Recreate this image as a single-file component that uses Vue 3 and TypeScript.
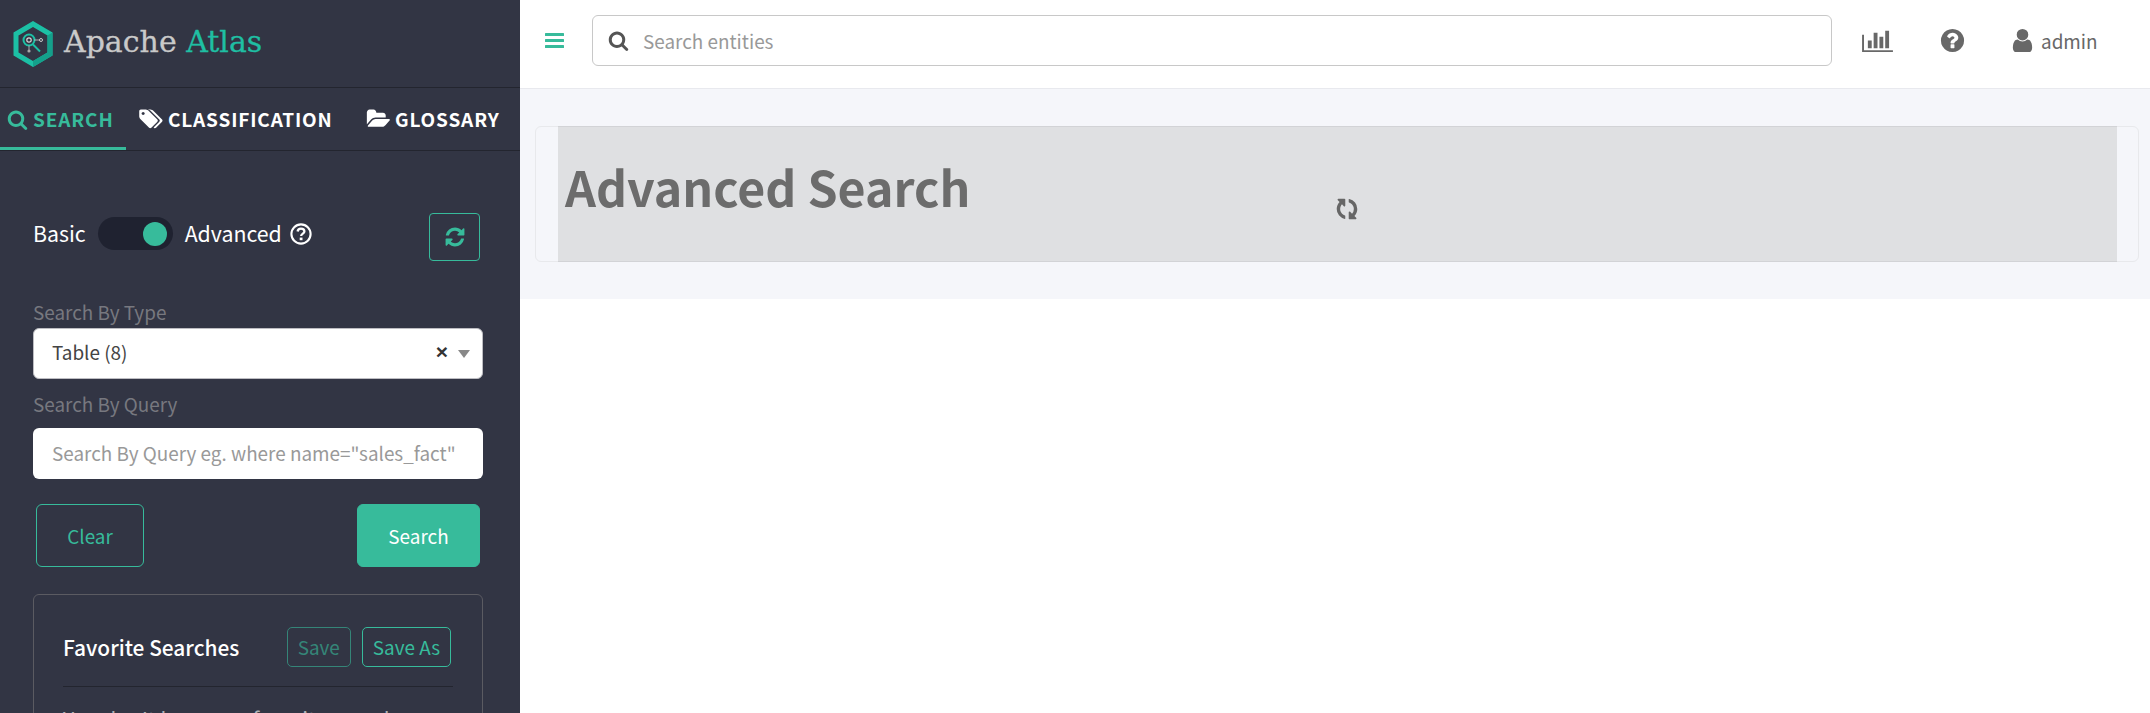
<script setup lang="ts">
const tabs = [
  { label: 'SEARCH', active: true },
  { label: 'CLASSIFICATION', active: false },
  { label: 'GLOSSARY', active: false },
]

const searchPath = 'M1216 832q0-185-131.500-316.500t-316.500-131.500-316.500 131.500-131.500 316.500 131.500 316.500 316.500 131.500 316.500-131.500 131.500-316.500zm512 832q0 52-38 90t-90 38q-54 0-90-38l-343-342q-179 124-399 124-143 0-273.500-55.500t-225-150-150-225-55.500-273.500 55.500-273.500 150-225 225-150 273.500-55.500 273.500 55.500 225 150 150 225 55.500 273.500q0 220-124 399l343 343q37 37 37 90z'
const refreshPath = 'M1639 1056q0 5-1 7-64 268-268 434.500t-478 166.500q-146 0-282.500-55t-243.500-157l-129 129q-19 19-45 19t-45-19-19-45v-448q0-26 19-45t45-19h448q26 0 45 19t19 45-19 45l-137 137q71 66 161 102t187 36q134 0 250-65t186-179q11-17 53-117 8-23 30-23h192q13 0 22.500 9.500t9.500 22.500zm25-800v448q0 26-19 45t-45 19h-448q-26 0-45-19t-19-45 19-45l138-138q-148-137-349-137-134 0-250 65t-186 179q-11 17-53 117-8 23-30 23h-199q-13 0-22.500-9.500t-9.500-22.500v-7q65-268 270-434.500t480-166.500q146 0 284 55.500t245 156.500l130-129q19-19 45-19t45 19 19 45z'
</script>

<template>
  <div class="page">
    <aside class="sidebar">
      <div class="brand">
        <svg class="logo" viewBox="0 0 40 46" width="40" height="46">
          <path d="M20 3 37 13V33L20 43 3 33V13Z" fill="none" stroke="#1cc0a5" stroke-width="5" stroke-linejoin="miter" />
          <path d="M39.500 11.500V34.500L20 46V40L34.500 31.500V14.500Z" fill="#14a08b" />
          <circle cx="16" cy="19" r="5.500" fill="none" stroke="#1cc0a5" stroke-width="2" />
          <circle cx="16" cy="19" r="2.200" fill="none" stroke="#d5d5d5" stroke-width="1.200" />
          <path d="M20 23.500 27 30.500" stroke="#1cc0a5" stroke-width="2" />
          <path d="M21 19H27M16 24.500V29" stroke="#c8c8c8" stroke-width=".8" />
          <circle cx="28" cy="19" r="1.500" fill="none" stroke="#c8c8c8" />
          <circle cx="16" cy="30" r="1.600" fill="#a8a8a8" />
        </svg>
        <span class="brand-name">Apache <span class="brand-accent">Atlas</span></span>
      </div>

      <nav class="tabs">
        <a v-for="tab in tabs" :key="tab.label" class="tab" :class="{ active: tab.active }">
          <svg v-if="tab.label === 'SEARCH'" class="tab-icon" viewBox="0 0 1792 1792" width="21" height="21"><path :d="searchPath" /></svg>
          <svg v-else-if="tab.label === 'CLASSIFICATION'" class="tab-icon" viewBox="0 0 1920 1792" width="24" height="22"><path d="M448 448q0-53-37.500-90.500t-90.500-37.500-90.500 37.500-37.500 90.500 37.500 90.500 90.500 37.500 90.500-37.500 37.500-90.500zm1067 576q0 53-37 90l-491 492q-39 37-91 37-53 0-90-37l-715-716q-38-37-64.500-101t-26.500-117v-416q0-52 38-90t90-38h416q53 0 117 26.500t102 64.500l715 714q37 39 37 91zm384 0q0 53-37 90l-491 492q-39 37-91 37-36 0-59-14t-53-45l470-470q37-37 37-90 0-52-37-91l-715-714q-38-38-102-64.500t-117-26.500h224q53 0 117 26.500t102 64.500l715 714q37 39 37 91z" /></svg>
          <svg v-else class="tab-icon" viewBox="0 0 1943 1792" width="24" height="22"><path d="M1943 952q0 31-31 66l-336 396q-43 51-120.500 86.500t-143.500 35.500h-1088q-34 0-60.500-13t-26.500-43q0-31 31-66l336-396q43-51 120.500-86.500t143.500-35.500h1088q34 0 60.500 13t26.500 43zm-343-344v160h-832q-94 0-197 47.500t-164 119.500l-337 396-5 6q0-4-.5-12.500t-.5-12.500v-960q0-92 66-158t158-66h320q92 0 158 66t66 158v32h544q92 0 158 66t66 158z" /></svg>
          {{ tab.label }}
        </a>
      </nav>

      <div class="search-pane">
        <div class="mode-row">
          <span>Basic</span>
          <span class="toggle"><span class="knob"></span></span>
          <span>Advanced</span>
          <svg class="mode-help" viewBox="0 0 22 22" width="22" height="22">
            <circle cx="11" cy="11" r="9.600" fill="none" stroke="#fff" stroke-width="2.100" />
            <path d="M7.600 8.500C7.800 6.700 9.200 5.700 11 5.700 12.900 5.700 14.400 6.800 14.400 8.500 14.400 10.500 11.100 10.700 11.100 13" fill="none" stroke="#fff" stroke-width="2.300" />
            <rect x="9.700" y="14.600" width="2.800" height="2.600" fill="#fff" />
          </svg>
          <button class="refresh-btn">
            <svg viewBox="0 0 1792 1792" width="22" height="22"><path :d="refreshPath" /></svg>
          </button>
        </div>

        <label class="field-label type-label">Search By Type</label>
        <div class="select-box">
          <span>Table (8)</span>
          <span class="select-clear">×</span>
          <span class="select-arrow"></span>
        </div>

        <label class="field-label query-label">Search By Query</label>
        <div class="query-box">Search By Query eg. where name="sales_fact"</div>

        <div class="action-row">
          <button class="btn-clear">Clear</button>
          <button class="btn-search">Search</button>
        </div>

        <section class="favorites">
          <div class="fav-head">
            <h4>Favorite Searches</h4>
            <button class="btn-small disabled">Save</button>
            <button class="btn-small">Save As</button>
          </div>
          <p class="fav-empty">You don't have any favorite search.</p>
        </section>
      </div>
    </aside>

    <main class="main">
      <header class="topbar">
        <svg class="menu-icon" viewBox="0 0 19 15" width="19" height="15">
          <rect width="19" height="3" y="0" rx=".5" /><rect width="19" height="3" y="6" rx=".5" /><rect width="19" height="3" y="12" rx=".5" />
        </svg>
        <div class="global-search">
          <svg viewBox="0 0 1792 1792" width="21" height="21"><path :d="searchPath" /></svg>
          <span>Search entities</span>
        </div>
        <svg class="top-chart" viewBox="0 0 2048 1792" width="31" height="27"><path d="M640 896v512h-256v-512h256zm384-512v1024h-256v-1024h256zm1024 1152v128h-2048v-1152h128v1024h1920zm-640-896v768h-256v-768h256zm384-384v1152h-256v-1152h256z" /></svg>
        <svg class="top-help" viewBox="0 0 1792 1792" width="27" height="27"><path d="M1024 1376v-192q0-14-9-23t-23-9h-192q-14 0-23 9t-9 23v192q0 14 9 23t23 9h192q14 0 23-9t9-23zm256-672q0-88-55.500-163t-138.500-116-170-41q-243 0-371 213-15 24 8 42l132 100q7 6 19 6 16 0 25-12 53-68 86-92 34-24 86-24 48 0 85.500 26t37.500 59q0 38-20 61t-68 45q-63 28-115.500 86.500t-52.500 125.500v36q0 14 9 23t23 9h192q14 0 23-9t9-23q0-19 21.500-49.500t54.500-49.500q32-18 49-28.500t46-35 44.500-48 28-60.500 12.500-81zm384 192q0 209-103 385.500t-279.500 279.500-385.500 103-385.500-103-279.500-279.500-103-385.500 103-385.500 279.500-279.500 385.500-103 385.500 103 279.500 279.500 103 385.500z" /></svg>
        <div class="top-user">
          <svg viewBox="0 0 1792 1792" width="27" height="27"><path d="M1536 1399q0 109-62.500 187t-150.500 78h-854q-88 0-150.500-78t-62.500-187q0-85 8.500-160.500t31.500-152 58.500-131 94-89 134.500-34.500q131 128 313 128t313-128q76 0 134.500 34.500t94 89 58.500 131 31.500 152 8.500 160.500zm-256-887q0 159-112.500 271.500t-271.500 112.500-271.500-112.500-112.500-271.500 112.500-271.500 271.500-112.500 271.500 112.500 112.500 271.500z" /></svg>
          <span>admin</span>
        </div>
      </header>

      <div class="content">
        <div class="panel">
          <div class="panel-mask">
            <h1>Advanced Search</h1>
            <svg class="spinner" viewBox="0 0 1792 1792" width="24" height="24"><path :d="refreshPath" /></svg>
          </div>
        </div>
      </div>
    </main>
  </div>
</template>

<style>
html, body {
  margin: 0;
  background: #fff;
  overflow: hidden;
}
</style>

<style scoped>
.page {
  display: flex;
  width: 2150px;
  height: 713px;
  overflow: hidden;
  font-family: 'Noto Sans CJK SC', 'Noto Sans', sans-serif;
  font-size: 18.900px;
  line-height: 30px;
  color: #686868;
}

/* sidebar */
.sidebar {
  width: 520px;
  height: 713px;
  flex-shrink: 0;
  overflow: hidden;
  background: #323544;
  color: #fff;
}

.brand {
  display: flex;
  align-items: center;
  gap: 11px;
  height: 87px;
  padding-left: 13px;
  box-sizing: content-box;
  border-bottom: 1px solid #23252f;
}

.logo {
  flex-shrink: 0;
}

.brand-name {
  font-family: 'DejaVu Serif', serif;
  font-size: 30px;
  color: #c9c9c9;
  -webkit-text-stroke: .3px currentColor;
  margin-bottom: 3px;
}

.brand-accent {
  color: #1fbfa3;
}

.tabs {
  display: flex;
  height: 62px;
  border-bottom: 1px solid #23252f;
}

.tab {
  display: flex;
  align-items: center;
  gap: 5px;
  box-sizing: border-box;
  font-size: 19px;
  font-weight: 700;
  letter-spacing: .85px;
  white-space: nowrap;
  color: #fff;
}

.tab:nth-child(1) { width: 126px; padding-left: 7px; }
.tab:nth-child(2) { width: 212px; padding-left: 13px; }
.tab:nth-child(3) { width: 182px; padding-left: 28px; }

.tab.active {
  color: #37bb9b;
  box-shadow: inset 0 -3px 0 #37bb9b;
}

.tab-icon {
  fill: currentColor;
}

.search-pane {
  padding: 62px 40px 0 33px;
}

.mode-row {
  display: flex;
  align-items: flex-start;
  height: 48px;
  font-size: 21.300px;
  line-height: 40px;
}

.toggle {
  width: 75px;
  height: 33px;
  margin: 4px 12px 0 12px;
  border-radius: 17px;
  background: #1f2230;
  position: relative;
}

.knob {
  position: absolute;
  right: 6px;
  top: 5px;
  width: 24px;
  height: 24px;
  border-radius: 50%;
  background: #37bb9b;
}

.mode-help {
  margin: 10px 0 0 8px;
}

.refresh-btn {
  display: flex;
  align-items: center;
  justify-content: center;
  width: 51px;
  height: 48px;
  margin-left: auto;
  padding: 0;
  background: transparent;
  border: 1px solid #37bb9b;
  border-radius: 4px;
}

.refresh-btn svg {
  fill: #37bb9b;
}

.field-label {
  display: block;
  color: #77787f;
}

.type-label {
  margin-top: 36px;
}

.query-label {
  margin-top: 10px;
}

.select-box {
  display: flex;
  align-items: center;
  width: 450px;
  height: 51px;
  margin-top: 1px;
  padding: 0 12px 3px 18px;
  box-sizing: border-box;
  background: #fff;
  border: 1px solid #bdbdc2;
  border-radius: 6px;
  color: #444;
}

.select-clear {
  margin-left: auto;
  font-family: 'Liberation Sans', sans-serif;
  font-size: 21px;
  font-weight: 700;
  color: #333;
}

.select-arrow {
  margin: 3px 0 0 10px;
  border-top: 8px solid #888;
  border-left: 6px solid transparent;
  border-right: 6px solid transparent;
}

.query-box {
  width: 450px;
  height: 51px;
  margin-top: 9px;
  padding-left: 19px;
  box-sizing: border-box;
  background: #fff;
  border-radius: 6px;
  line-height: 50px;
  white-space: nowrap;
  color: #999;
}

.action-row {
  display: flex;
  justify-content: space-between;
  margin: 25px 0 0 3px;
}

.action-row button {
  height: 63px;
  font: inherit;
  border-radius: 6px;
  border: 1px solid #37bb9b;
}

.btn-clear {
  width: 108px;
  background: transparent;
  color: #37bb9b;
}

.btn-search {
  width: 123px;
  background: #37bb9b;
  color: #fff;
}

.favorites {
  width: 450px;
  height: 200px;
  margin-top: 27px;
  padding: 32px 29px 0;
  box-sizing: border-box;
  border: 1px solid #5b5b62;
  border-radius: 6px;
}

.fav-head {
  display: flex;
  align-items: center;
  gap: 11px;
  height: 40px;
  padding-bottom: 19px;
  border-bottom: 1px solid #23252f;
  box-sizing: content-box;
}

.fav-head h4 {
  margin: 0 auto 0 0;
  font-size: 20.900px;
  font-weight: 500;
  color: #fff;
}

.btn-small {
  height: 40px;
  padding: 0 10px;
  font: inherit;
  line-height: 38px;
  background: transparent;
  border: 1px solid #37bb9b;
  border-radius: 5px;
  color: #37bb9b;
}

.btn-small.disabled {
  opacity: .6;
}

.fav-head .btn-small:last-child {
  margin-right: 2px;
}

.fav-empty {
  margin: 17px 0 0;
  font-size: 21px;
  color: #b0b1b6;
}

/* main column */
.main {
  flex: 1;
  min-width: 0;
}

.topbar {
  display: flex;
  align-items: center;
  height: 89px;
  padding: 0 0 7px 25px;
  box-sizing: border-box;
  border-bottom: 1px solid #e8e9ee;
}

.menu-icon {
  fill: #37bb9b;
  flex-shrink: 0;
}

.global-search {
  display: flex;
  align-items: center;
  gap: 14px;
  width: 1240px;
  height: 51px;
  margin-left: 28px;
  padding-left: 15px;
  box-sizing: border-box;
  border: 1px solid #c8c8c8;
  border-radius: 6px;
  color: #999;
}

.global-search svg {
  fill: #555;
}

.top-chart {
  margin-left: 30px;
  fill: #686868;
}

.top-help {
  margin-left: 46px;
  fill: #686868;
}

.top-user {
  display: flex;
  align-items: center;
  gap: 5px;
  margin-left: 43px;
}

.top-user svg {
  fill: #686868;
}

.content {
  height: 210px;
  padding: 37px 11px 0 15px;
  box-sizing: border-box;
  background: #f5f6fa;
}

.panel {
  height: 136px;
  padding: 0 21px 0 22px;
  border: 1px solid #e8e9ec;
  border-radius: 6px;
  box-sizing: border-box;
}

.panel-mask {
  position: relative;
  height: 136px;
  margin-top: -1px;
  padding: 21px 0 0 7px;
  box-sizing: border-box;
  background: #dfe0e2;
  border-top: 1px solid #d2d3d6;
  border-bottom: 1px solid #d2d3d6;
}

.panel-mask h1 {
  margin: 0;
  font-size: 48.300px;
  line-height: 76px;
  font-weight: 700;
  color: #6c6c6c;
}

.spinner {
  position: absolute;
  left: 777px;
  top: 70px;
  transform: rotate(90deg);
  fill: #666;
}
</style>
